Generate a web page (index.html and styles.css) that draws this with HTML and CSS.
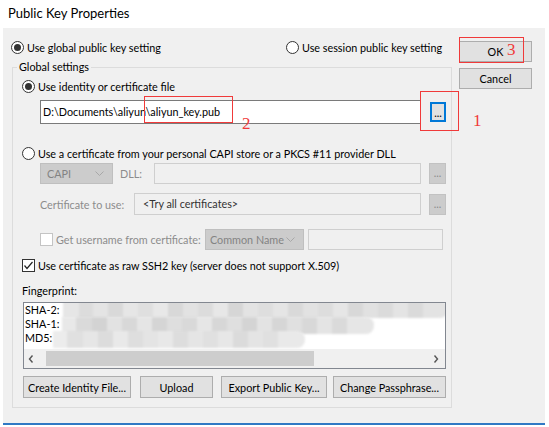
FILE: index.html
```html
<!DOCTYPE html>
<html>
<head>
<meta charset="utf-8">
<title>Public Key Properties</title>
<link rel="stylesheet" href="styles.css">
</head>
<body>
<div class="window">
  <div class="titlebar">Public Key Properties</div>
  <div class="dialog">
    <div class="main">
      <div class="toprow">
        <div class="radio on"><span class="rb"></span><span>Use global public key setting</span></div>
        <div class="radio"><span class="rb"></span><span>Use session public key setting</span></div>
      </div>
      <fieldset class="group">
        <legend>Global settings</legend>
        <div class="gbody">
          <div class="radio on r-ident"><span class="rb"></span><span>Use identity or certificate file</span></div>
          <div class="pathrow">
            <div class="field path">D:\Documents\aliyun\aliyun_key.pub</div>
            <div class="dots active">...</div>
          </div>
          <div class="radio r-capi"><span class="rb"></span><span>Use a certificate from your personal CAPI store or a PKCS #11 provider DLL</span></div>
          <div class="caprow">
            <div class="combo dis w-capi"><span>CAPI</span><svg width="9" height="5" viewBox="0 0 9 5"><polyline points="0.5,0.5 4.5,4.5 8.5,0.5" fill="none" stroke="#a8a8a8"/></svg></div>
            <div class="dlabel l-dll">DLL:</div>
            <div class="field dis w-dll"></div>
            <div class="dots dis">...</div>
          </div>
          <div class="certrow">
            <div class="dlabel l-cert">Certificate to use:</div>
            <div class="field ro w-cert">&lt;Try all certificates&gt;</div>
            <div class="dots dis">...</div>
          </div>
          <div class="userrow">
            <div class="check dis l-user"><span class="cb"></span><span>Get username from certificate:</span></div>
            <div class="combo dis w-cn"><span>Common Name</span><svg width="9" height="5" viewBox="0 0 9 5"><polyline points="0.5,0.5 4.5,4.5 8.5,0.5" fill="none" stroke="#a8a8a8"/></svg></div>
            <div class="field dis w-user"></div>
          </div>
          <div class="check rawrow"><span class="cb on"><svg width="11" height="11" viewBox="0 0 11 11"><polyline points="1.5,5.5 4,8.5 9.5,2" fill="none" stroke="#222" stroke-width="1.2"/></svg></span><span>Use certificate as raw SSH2 key (server does not support X.509)</span></div>
          <div class="fplabel">Fingerprint:</div>
          <div class="fpbox">
            <div class="fplines">
              <div>SHA-2:</div>
              <div>SHA-1:</div>
              <div>MD5:</div>
            </div>
            <div class="mosaic m1"></div>
            <div class="mosaic m2"></div>
            <div class="mosaic m3"></div>
            <div class="hscroll">
              <svg class="arr" width="6" height="8" viewBox="0 0 6 8"><polyline points="4.5,0.5 1.5,4 4.5,7.5" fill="none" stroke="#555" stroke-width="1.4"/></svg>
              <div class="track"><div class="thumb"></div></div>
              <svg class="arr" width="6" height="8" viewBox="0 0 6 8"><polyline points="1.5,0.5 4.5,4 1.5,7.5" fill="none" stroke="#555" stroke-width="1.4"/></svg>
            </div>
          </div>
          <div class="btnrow">
            <div class="btn b-create">Create Identity File...</div>
            <div class="btn b-upload">Upload</div>
            <div class="btn b-export">Export Public Key...</div>
            <div class="btn b-change">Change Passphrase...</div>
          </div>
        </div>
      </fieldset>
    </div>
    <div class="side">
      <div class="btn b-side">OK</div>
      <div class="btn b-side">Cancel</div>
    </div>
  </div>
  <div class="mark box2"></div>
  <div class="num n2">2</div>
  <div class="mark box1"></div>
  <div class="num n1">1</div>
  <div class="mark box3"></div>
  <div class="num n3">3</div>
</div>
</body>
</html>
```
FILE: styles.css
```css
* { box-sizing: border-box; }
body {
  margin: 0;
  background: #fff;
  font-family: Lato, "Liberation Sans", sans-serif;
  font-size: 10.8px;
  color: #000;
}
.window {
  position: relative;
  width: 549px;
  height: 427px;
  overflow: hidden;
}
.titlebar {
  height: 28px;
  padding: 5px 0 0 8px;
  font-size: 13px;
  line-height: 16px;
}
.dialog {
  margin-left: 3px;
  width: 542px;
  height: 397px;
  background: #f0f0f0;
  border-bottom: 2px solid #3079c4;
  display: flex;
}
.main { width: 456px; flex: none; }
.toprow {
  display: grid;
  grid-template-columns: 275px auto;
  padding: 13px 0 0 8px;
  height: 26px;
}
.radio, .check {
  display: flex;
  align-items: center;
  gap: 3px;
  height: 13px;
  white-space: nowrap;
}
.rb {
  width: 13px;
  height: 13px;
  flex: none;
  border: 1px solid #333;
  border-radius: 50%;
  background: #fff;
  display: flex;
  align-items: center;
  justify-content: center;
}
.radio.on .rb::after {
  content: "";
  width: 7px;
  height: 7px;
  border-radius: 50%;
  background: #333;
}
.cb {
  width: 13px;
  height: 13px;
  flex: none;
  border: 1px solid #333;
  background: #fff;
  display: flex;
  align-items: center;
  justify-content: center;
}
.check.dis { color: #8c8c8c; }
.check.dis .cb { border-color: #c4c4c4; }

.group {
  margin: 6px 0 0 9px;
  padding: 0;
  width: 440px;
  height: 348px;
  min-width: 0;
  border: 1px solid #dcdcdc;
}
.group legend {
  margin-left: 4px;
  padding: 0 2px;
  line-height: 14px;
}
.gbody { display: flex; flex-direction: column; }
.r-ident { margin: 6px 0 0 9px; }
.pathrow {
  display: flex;
  align-items: center;
  margin: 7px 0 0 27px;
  height: 24px;
}
.field {
  height: 24px;
  border: 1px solid #7a7a7a;
  background: #fff;
  padding-left: 2px;
  line-height: 22px;
  white-space: nowrap;
}
.path { width: 381px; }
.field.dis, .field.ro {
  background: #f0f0f0;
  border-color: #cfcfcf;
  height: 21px;
  line-height: 19px;
}
.field.ro { height: 22px; line-height: 20px; padding-left: 8px; color: #333; }
.dots {
  width: 17px;
  height: 21px;
  margin-left: 8px;
  flex: none;
  display: flex;
  justify-content: center;
  line-height: 17px;
}
.dots.active {
  border: 2px solid #0078d7;
  background: #e1e1e1;
  width: 16px;
  height: 20px;
  margin-left: 9px;
}
.dots.dis {
  background: #cccccc;
  border: 1px solid #c2c2c2;
  color: #8c8c8c;
}
.r-capi { margin: 23px 0 0 9px; }
.caprow {
  display: flex;
  align-items: center;
  margin: 3px 0 0 27px;
  height: 21px;
}
.combo {
  height: 21px;
  display: flex;
  align-items: center;
  justify-content: space-between;
  padding: 0 8px 0 6px;
  flex: none;
}
.combo.dis {
  background: #cccccc;
  border: 1px solid #bfbfbf;
  color: #838383;
}
.w-capi { width: 73px; }
.dlabel { color: #8c8c8c; flex: none; white-space: nowrap; }
.l-dll { width: 41px; padding-left: 7px; }
.w-dll { width: 267px; }
.certrow {
  display: flex;
  align-items: center;
  margin: 9px 0 0 27px;
  height: 22px;
}
.l-cert { width: 94px; }
.w-cert { width: 287px; }
.userrow {
  display: flex;
  align-items: center;
  margin: 14px 0 0 27px;
  height: 21px;
}
.l-user { width: 165px; }
.w-cn { width: 99px; padding-left: 4px; }
.w-user { width: 135px; margin-left: 4px; }
.rawrow { margin: 9px 0 0 9px; }
.fplabel { margin: 12px 0 0 9px; height: 14px; line-height: 14px; }
.fpbox {
  position: relative;
  margin: 4px 0 0 10px;
  width: 423px;
  height: 67px;
  border: 1px solid #828790;
  background: #fff;
  overflow: hidden;
}
.fplines { padding-left: 1px; line-height: 14px; }
.mosaic {
  position: absolute;
  height: 17px;
  filter: blur(0.8px);
  border-radius: 0 8px 8px 0;
}
.m1 {
  left: 39px; top: -2px; width: 385px;
  background: linear-gradient(90deg, #e6e6e6 0 16px, #dcdcdc 16px 30px, #e4e4e4 30px 45px, #d9d9d9 45px 60px, #e6e6e6 60px 75px, #dfdfdf 75px 90px, #e8e8e8 90px 105px, #d8d8d8 105px 120px, #e2e2e2 120px 135px, #dcdcdc 135px 150px, #e7e7e7 150px 165px, #d6d6d6 165px 180px, #e3e3e3 180px 195px, #dedede 195px 210px, #e5e5e5 210px 225px, #d9d9d9 225px 240px, #e2e2e2 240px 255px, #dddddd 255px 270px, #e6e6e6 270px 285px, #d8d8d8 285px 300px, #e1e1e1 300px 315px, #dbdbdb 315px 330px, #e4e4e4 330px 345px, #dadada 345px 360px, #e3e3e3 360px 385px);
}
.m2 {
  left: 38px; top: 14px; width: 312px;
  background: linear-gradient(90deg, #e8e8e8 0 14px, #dadada 14px 30px, #d3d3d3 30px 45px, #e2e2e2 45px 60px, #d8d8d8 60px 75px, #e5e5e5 75px 90px, #d5d5d5 90px 105px, #dedede 105px 120px, #d9d9d9 120px 135px, #e6e6e6 135px 150px, #d7d7d7 150px 165px, #dfdfdf 165px 180px, #d4d4d4 180px 195px, #e3e3e3 195px 210px, #d6d6d6 210px 225px, #e0e0e0 225px 240px, #d8d8d8 240px 255px, #e4e4e4 255px 270px, #dadada 270px 285px, #e6e6e6 285px 312px);
}
.m3 {
  left: 29px; top: 28px; width: 252px;
  background: linear-gradient(90deg, #ececec 0 14px, #e0e0e0 14px 30px, #e6e6e6 30px 45px, #dcdcdc 45px 60px, #e9e9e9 60px 75px, #dedede 75px 90px, #e4e4e4 90px 105px, #e8e8e8 105px 120px, #dddddd 120px 135px, #e5e5e5 135px 150px, #e0e0e0 150px 165px, #e7e7e7 165px 180px, #dbdbdb 180px 195px, #e4e4e4 195px 210px, #e0e0e0 210px 225px, #e9e9e9 225px 252px);
}
.hscroll {
  position: absolute;
  left: 0; right: 0; bottom: 0;
  height: 19px;
  background: #f0f0f0;
  display: flex;
  align-items: center;
  padding: 0 6px 0 4px;
}
.track { flex: 1; height: 17px; padding: 1px 0 1px 12px; }
.thumb { width: 268px; height: 15px; background: #cdcdcd; }
.btnrow {
  display: flex;
  margin: 7px 0 0 10px;
  height: 22px;
}
.btn {
  height: 22px;
  background: #e1e1e1;
  border: 1px solid #adadad;
  display: flex;
  align-items: center;
  justify-content: center;
  white-space: nowrap;
  flex: none;
}
.b-create { width: 108px; }
.b-upload { width: 73px; margin-left: 9px; }
.b-export { width: 106px; margin-left: 8px; }
.b-change { width: 113px; margin-left: 6px; }
.side {
  padding-top: 13px;
  display: flex;
  flex-direction: column;
  gap: 6px;
}
.b-side { width: 73px; height: 21px; }

.mark {
  position: absolute;
  border: 1px solid #f03a3a;
}
.box2 { left: 144px; top: 96px; width: 89px; height: 27px; }
.box1 { left: 420px; top: 91px; width: 39px; height: 40px; }
.box3 { left: 459px; top: 37px; width: 65px; height: 26px; }
.num {
  position: absolute;
  font-family: "Liberation Serif", serif;
  font-size: 17px;
  line-height: 17px;
  color: #f03a3a;
}
.n2 { left: 242px; top: 115px; }
.n1 { left: 473px; top: 112px; }
.n3 { left: 507px; top: 41px; }
```
